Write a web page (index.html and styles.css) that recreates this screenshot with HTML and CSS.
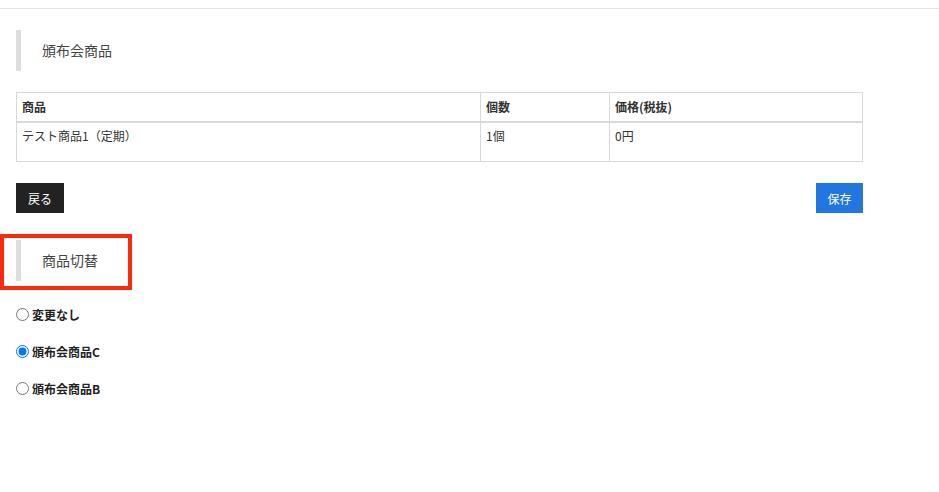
FILE: index.html
```html
<!DOCTYPE html>
<html lang="ja">
<head>
<meta charset="utf-8">
<link rel="stylesheet" href="styles.css">
</head>
<body>
<div class="topbar"></div>
<main class="content">
  <h2 class="heading first">頒布会商品</h2>
  <table class="items">
    <thead>
      <tr><th class="c1">商品</th><th class="c2">個数</th><th class="c3">価格(税抜)</th></tr>
    </thead>
    <tbody>
      <tr><td>テスト商品1（定期）</td><td>1個</td><td>0円</td></tr>
    </tbody>
  </table>
  <div class="actions">
    <button class="btn btn-back">戻る</button>
    <button class="btn btn-save">保存</button>
  </div>
  <div class="highlight">
    <h2 class="heading">商品切替</h2>
  </div>
  <div class="options">
    <label class="option"><input type="radio" name="p"> 変更なし</label>
    <label class="option"><input type="radio" name="p" checked> 頒布会商品C</label>
    <label class="option"><input type="radio" name="p"> 頒布会商品B</label>
  </div>
</main>
</body>
</html>
```
FILE: styles.css
```css
* { box-sizing: border-box; }
body {
  margin: 0;
  background: #fff;
  font-family: "Noto Sans CJK JP", "Noto Sans", sans-serif;
  color: #333;
}
.topbar {
  height: 9px;
  border-bottom: 1px solid #e6e6e6;
}
.content {
  padding: 0 76px 0 16px;
}
.heading {
  margin: 0;
  height: 41px;
  border-left: 5px solid #dedede;
  padding-left: 21px;
  font-size: 14px;
  font-weight: normal;
  line-height: 41px;
  color: #444;
}
.heading.first { margin-top: 21px; }
.items {
  margin-top: 21px;
  width: 847px;
  border-collapse: collapse;
  font-size: 12px;
  color: #333;
}
.items th, .items td {
  border: 1px solid #d9d9d9;
  text-align: left;
  padding: 0 5px;
}
.items th {
  height: 29px;
  font-weight: bold;
  border-bottom: 2px solid #d9d9d9;
  vertical-align: middle;
}
.items td {
  height: 40px;
  vertical-align: top;
  padding-top: 4px;
}
.items .c1 { width: 464px; }
.items .c2 { width: 129px; }
.actions {
  margin-top: 21px;
  width: 847px;
  display: flex;
  justify-content: space-between;
}
.btn {
  height: 30px;
  border: 0;
  padding: 0 10px;
  font-family: inherit;
  font-size: 12px;
  color: #fff;
}
.btn-back { background: #222; width: 48px; }
.btn-save { background: #2176df; width: 47px; }
.highlight {
  margin: 21px 0 0 -16px;
  width: 132px;
  border: 4px solid #fb2a0c;
  padding: 2px 0 5px 12px;
}
.options {
  margin-top: 18px;
  display: flex;
  flex-direction: column;
  gap: 24px;
}
.option {
  display: flex;
  align-items: center;
  gap: 3px;
  height: 13px;
  font-size: 12px;
  font-weight: bold;
  color: #222;
}
.option input {
  margin: 0;
  width: 13px;
  height: 13px;
}
```
